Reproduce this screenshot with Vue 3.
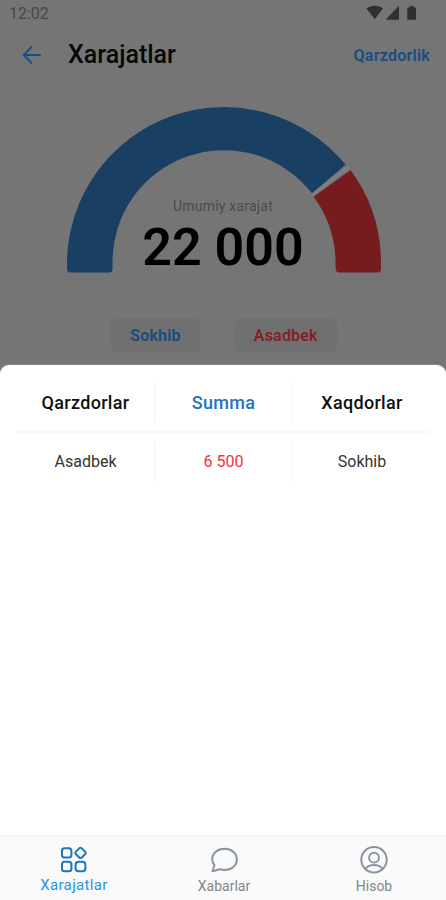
<script setup>
const people = [
  { name: 'Sokhib', tone: 'blue' },
  { name: 'Asadbek', tone: 'red' }
]
const debts = [{ from: 'Asadbek', sum: '6 500', to: 'Sokhib' }]
</script>

<template>
  <div class="screen">
    <div class="status">
      <span class="time">12:02</span>
      <svg class="signals" width="52" height="16" viewBox="0 0 52 16">
        <path d="M.5 3.400C5-.1 12.500-.1 17 3.400L8.800 14.200Z" />
        <path d="M33 .8V14.700H19.500Z" />
        <path d="M41.300 2.600h2.400V1h4v1.600h2.300V14.700h-8.700Z" />
      </svg>
    </div>
    <header class="topbar">
      <svg class="back" width="20" height="20" viewBox="0 0 20 20">
        <path d="M18 10H2M9.500 2 1.800 10l7.700 8" />
      </svg>
      <h1>Xarajatlar</h1>
      <span class="link">Qarzdorlik</span>
    </header>
    <section class="gauge">
      <svg width="316" height="168" viewBox="66 105 316 168">
        <path class="gap" d="M349 166.500 312 195" />
        <path class="arc-blue" d="M67 269V263A157 157 0 0 1 345.600 164.800L312 193.300A111.500 111.500 0 0 0 112.500 263V269Q112.500 272.600 109 272.600H70.500Q67 272.600 67 269Z" />
        <path class="arc-red" d="M350.600 170A157 157 0 0 1 381 263V269Q381 272.600 377.500 272.600H339.500Q336 272.600 335.800 269L335.500 263A111.500 111.500 0 0 0 313.600 196.700Z" />
      </svg>
      <div class="total">
        <span class="caption">Umumiy xarajat</span>
        <span class="amount">22 000</span>
      </div>
    </section>
    <div class="chips">
      <span v-for="p in people" :key="p.name" class="chip" :class="p.tone">{{ p.name }}</span>
    </div>
    <main class="sheet">
      <div class="row head">
        <span class="cell">Qarzdorlar</span>
        <span class="cell summa">Summa</span>
        <span class="cell">Xaqdorlar</span>
      </div>
      <div v-for="d in debts" :key="d.from" class="row">
        <span class="cell">{{ d.from }}</span>
        <span class="cell sum">{{ d.sum }}</span>
        <span class="cell">{{ d.to }}</span>
      </div>
    </main>
    <nav class="tabs">
      <div class="tab active">
        <svg width="28" height="28" viewBox="0 0 28 28">
          <rect x="2" y="2.200" width="9.400" height="9.400" rx="2.500" />
          <rect x="2" y="15.800" width="9.400" height="9.400" rx="2.500" />
          <rect x="15.600" y="15.800" width="9.800" height="9.400" rx="3" />
          <rect x="16.400" y="2.800" width="8.200" height="8.200" rx="1.800" transform="rotate(45 20.500 6.900)" />
        </svg>
        <span>Xarajatlar</span>
      </div>
      <div class="tab">
        <svg width="28" height="28" viewBox="0 0 28 28">
          <path d="M14.500 2.700c7 0 12.300 4.600 12.300 10.700s-5.300 10.700-12.300 10.700c-1.700 0-3.400-.3-4.800-.9L2.500 25.300l2-6.300c-1.500-1.500-2.300-3.500-2.300-5.600 0-6.100 5.300-10.700 12.300-10.700Z" />
        </svg>
        <span>Xabarlar</span>
      </div>
      <div class="tab">
        <svg width="28" height="28" viewBox="0 0 28 28">
          <circle cx="14" cy="13.700" r="12.700" />
          <circle cx="14" cy="11.700" r="4.900" />
          <path d="M5.500 22.700c2.200-2.400 5-3.600 8.500-3.600s6.300 1.200 8.500 3.600" />
        </svg>
        <span>Hisob</span>
      </div>
    </nav>
  </div>
</template>

<style>
body { margin: 0; background: #757575; }
</style>

<style scoped>
.screen {
  width: 446px;
  height: 900px;
  box-sizing: border-box;
  display: flex;
  flex-direction: column;
  overflow: hidden;
  background: #757575;
  font-family: Roboto, "Liberation Sans", sans-serif;
}
.status {
  height: 28px;
  box-sizing: border-box;
  padding: 5px 28px 0 9px;
  display: flex;
  justify-content: space-between;
}
.time { font-size: 16px; line-height: 18px; color: #484848; }
.signals { fill: #303030; }
.topbar {
  height: 54px;
  display: flex;
  align-items: center;
  padding: 0 16px 0 22px;
}
.back { fill: none; stroke: #184f80; stroke-width: 2; stroke-linecap: round; stroke-linejoin: round; }
h1 { margin: 0 0 0 26px; font-size: 25px; line-height: 30px; font-weight: 500; color: #080808; }
.link { margin-left: auto; font-size: 16px; font-weight: 600; color: #174e80; letter-spacing: .25px; }
.gauge {
  height: 191px;
  margin-top: 23px;
  margin-left: 2px;
  display: grid;
  justify-items: center;
}
.gauge > * { grid-area: 1 / 1; }
.gauge svg { display: block; }
.gap { stroke: #7f7f7f; stroke-width: 3; }
.arc-blue { fill: #193f62; }
.arc-red { fill: #761c1f; }
.total { display: flex; flex-direction: column; align-items: center; padding-top: 92px; margin-left: -2px; }
.caption { font-size: 14px; line-height: 18px; color: #4b4b4b; letter-spacing: .2px; }
.amount { font-size: 52px; line-height: 66px; font-weight: 600; color: #000; }
.chips { height: 69px; display: flex; justify-content: center; gap: 35px; padding: 22px 0 0 2px; box-sizing: border-box; }
.chip {
  height: 34px;
  padding: 0 19px;
  border-radius: 6px;
  background: #707070;
  font-size: 16px;
  line-height: 35px;
  font-weight: 600;
  letter-spacing: .2px;
}
.blue { color: #184b7a; }
.red { color: #871f24; }
.sheet {
  flex: 1;
  background: #fff;
  border-radius: 9px 9px 0 0;
  box-shadow: 0 0 2px #aaa;
  padding: 9px 16px 0 17px;
}
.row { height: 58px; display: grid; grid-template-columns: repeat(3, 138px); align-items: center; }
.head { height: 57px; border-bottom: 2px solid #f7f7f7; font-weight: 500; }
.cell { height: 40px; line-height: 40px; text-align: center; font-size: 16px; color: #333; border-right: 1px solid #f4f4f4; }
.cell:last-child { border-right: 0; }
.head .cell { font-size: 18px; color: #111; letter-spacing: .3px; }
.head .summa { color: #1976bf; }
.row .sum { color: #f1343b; }
.tabs { height: 65px; box-sizing: border-box; background: #fafafa; border-top: 2px solid #f4f4f4; display: grid; grid-template-columns: 148px 152px 148px; }
.tab { display: flex; flex-direction: column; align-items: center; padding-top: 9px; gap: 3px; font-size: 14px; line-height: 18px; color: #858585; letter-spacing: 0; }
.tab svg { fill: none; stroke: #8994a2; stroke-width: 2; stroke-linecap: round; stroke-linejoin: round; }
.active { color: #2596e5; font-size: 15px; letter-spacing: .35px; gap: 2px; }
.active svg { stroke: #1976bf; }
</style>
